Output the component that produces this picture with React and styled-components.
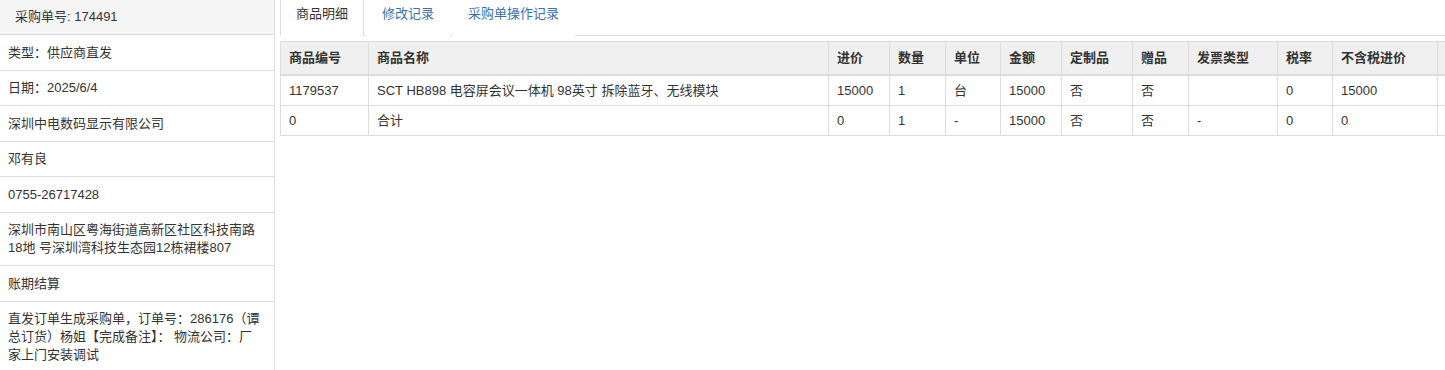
import React from 'react';
import styled, { createGlobalStyle } from 'styled-components';

const GlobalStyle = createGlobalStyle`
  html, body {
    margin: 0;
    padding: 0;
    overflow: hidden;
    background: #fff;
  }
  body {
    font-family: "Liberation Sans", Arial, "Noto Sans CJK SC", sans-serif;
    font-size: 13px;
    color: #333;
    line-height: 18px;
  }
`;

const Page = styled.div`
  display: flex;
  align-items: flex-start;
  width: 1445px;
  height: 370px;
  overflow: hidden;
`;

const Sidebar = styled.aside`
  flex: 0 0 274px;
  border-right: 1px solid #ddd;
  min-height: 370px;
`;

const InfoRow = styled.div`
  padding: ${(p) => (p.head ? '8px 15px' : '8.5px 12px 8px 8px')};
  background: ${(p) => (p.head ? '#f5f5f5' : '#fff')};
  border-bottom: 1px solid #ddd;
`;

const Main = styled.main`
  flex: 1;
  min-width: 0;
  padding-left: 5px;
  overflow: hidden;
`;

const Tabs = styled.ul`
  display: flex;
  list-style: none;
  margin: 0;
  padding: 0;
  border-bottom: 1px solid #ddd;
`;

const Tab = styled.li`
  margin-right: 2px;
  margin-bottom: -1px;
  padding: 5px 15px 12px;
  border: 1px solid ${(p) => (p.active ? '#ddd' : 'transparent')};
  border-top: none;
  border-bottom-color: ${(p) => (p.active ? '#fff' : 'transparent')};
  background: #fff;
  color: ${(p) => (p.active ? '#333' : '#3a72ab')};
  cursor: pointer;
`;

const Table = styled.table`
  margin-top: 5px;
  border-collapse: collapse;
  table-layout: fixed;
  width: 1257px;
`;

const Th = styled.th`
  text-align: left;
  font-weight: bold;
  background: #f0f0f0;
  padding: 7px 8px;
  border: 1px solid #ddd;
  border-bottom: 2px solid #ddd;
  white-space: nowrap;
`;

const Td = styled.td`
  padding: 6px 8px 5px;
  border: 1px solid #ddd;
  white-space: nowrap;
  overflow: hidden;
`;

const info = [
  '类型：供应商直发',
  '日期：2025/6/4',
  '深圳中电数码显示有限公司',
  '邓有良',
  '0755-26717428',
  '深圳市南山区粤海街道高新区社区科技南路18地 号深圳湾科技生态园12栋裙楼807',
  '账期结算',
  '直发订单生成采购单，订单号：286176（谭总订货）杨姐【完成备注】： 物流公司：厂家上门安装调试',
];

const columns = [
  { title: '商品编号', width: 88 },
  { title: '商品名称', width: 460 },
  { title: '进价', width: 61 },
  { title: '数量', width: 56 },
  { title: '单位', width: 55 },
  { title: '金额', width: 61 },
  { title: '定制品', width: 71 },
  { title: '赠品', width: 56 },
  { title: '发票类型', width: 89 },
  { title: '税率', width: 55 },
  { title: '不含税进价', width: 105 },
  { title: '', width: 100 },
];

const rows = [
  ['1179537', 'SCT HB898 电容屏会议一体机 98英寸 拆除蓝牙、无线模块', '15000', '1', '台', '15000', '否', '否', '', '0', '15000', ''],
  ['0', '合计', '0', '1', '-', '15000', '否', '否', '-', '0', '0', ''],
];

export default function App() {
  return (
    <>
      <GlobalStyle />
      <Page>
        <Sidebar>
          <InfoRow head>采购单号: 174491</InfoRow>
          {info.map((text, i) => (
            <InfoRow key={i}>{text}</InfoRow>
          ))}
        </Sidebar>
        <Main>
          <Tabs>
            <Tab active>商品明细</Tab>
            <Tab>修改记录</Tab>
            <Tab>采购单操作记录</Tab>
          </Tabs>
          <Table>
            <colgroup>
              {columns.map((c, i) => (
                <col key={i} style={{ width: c.width }} />
              ))}
            </colgroup>
            <thead>
              <tr>
                {columns.map((c, i) => (
                  <Th key={i}>{c.title}</Th>
                ))}
              </tr>
            </thead>
            <tbody>
              {rows.map((r, i) => (
                <tr key={i}>
                  {r.map((cell, j) => (
                    <Td key={j}>{cell}</Td>
                  ))}
                </tr>
              ))}
            </tbody>
          </Table>
        </Main>
      </Page>
    </>
  );
}
